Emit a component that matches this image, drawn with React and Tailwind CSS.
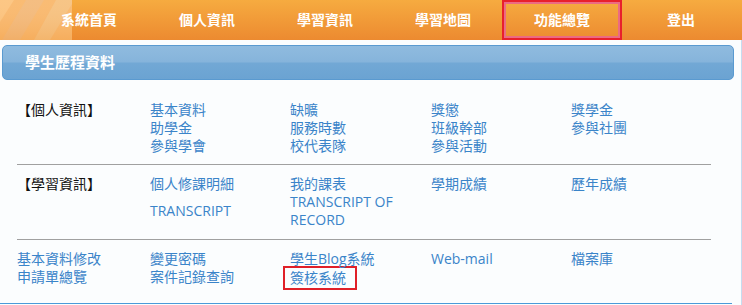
import React from "react";

const cjk = { fontFamily: '"Open Sans", "Noto Sans CJK TC", sans-serif' };

function L({ children }) {
  return <a className="block text-[#3a84c9] leading-[18px] whitespace-nowrap">{children}</a>;
}

const navItems = ["系統首頁", "個人資訊", "學習資訊", "學習地圖", "功能總覽", "登出"];

export default function App() {
  return (
    <div className="w-[742px] h-[305px] overflow-hidden bg-white relative" style={cjk}>
      {/* nav */}
      <div className="relative h-[40px] bg-gradient-to-b from-[#f6ab40] to-[#ec8a30] flex">
        <svg className="absolute left-0 top-0" width="72" height="40" viewBox="0 0 72 40">
          <rect x="0" y="0" width="72" height="40" fill="#f9b668" />
          <polygon points="0,0 14,0 0,22" fill="#fcc27a" />
          <polygon points="26,0 44,0 20,40 2,40" fill="#f3b877" />
          <polygon points="56,0 72,0 72,4 50,40 34,40" fill="#f6c07c" />
          <rect x="0" y="0" width="72" height="40" fill="url(#shade)" />
          <defs>
            <linearGradient id="shade" x1="0" y1="0" x2="0" y2="1">
              <stop offset="0" stopColor="#ffffff" stopOpacity="0.08" />
              <stop offset="1" stopColor="#e88a30" stopOpacity="0.2" />
            </linearGradient>
          </defs>
        </svg>
        <div className="w-[30px] shrink-0" />
        {navItems.map((t) => (
          <div
            key={t}
            className={
              "relative w-[118px] shrink-0 flex items-center justify-center text-white font-bold text-[14px] pb-[2px] " +
              (t === "功能總覽" ? "border-2 border-[#e8202c] shadow-[inset_0_0_0_2px_#ec6a82] w-[120px]" : "")
            }
          >
            {t}
          </div>
        ))}
      </div>

      {/* content */}
      <div className="h-[265px] border-r border-[#c6dcf0] bg-[#fbfdfe] pt-[5px]">
        <div className="ml-[2px] w-[732px] h-[35px] rounded-[5px] border border-[#5a9ad0] bg-[linear-gradient(to_bottom,#8fbbdf_0%,#86b4db_48%,#72a8d5_52%,#6ba3d2_100%)] flex items-center pl-[22px]">
          <span className="text-white font-bold text-[15px] pb-[1px]">學生歷程資料</span>
        </div>

        <div className="ml-[17px] w-[694px] text-[14px] mt-[21px]">
          {/* row 1 */}
          <div className="grid grid-cols-[133px_140px_141px_140px_140px] pb-[9px] border-b border-[#a0a0a0]">
            <div className="leading-[18px] text-[#111]">【個人資訊】</div>
            <div>
              <L>基本資料</L>
              <L>助學金</L>
              <L>參與學會</L>
            </div>
            <div>
              <L>缺曠</L>
              <L>服務時數</L>
              <L>校代表隊</L>
            </div>
            <div>
              <L>獎懲</L>
              <L>班級幹部</L>
              <L>參與活動</L>
            </div>
            <div>
              <L>獎學金</L>
              <L>參與社團</L>
            </div>
          </div>

          {/* row 2 */}
          <div className="grid grid-cols-[133px_140px_141px_140px_140px] pt-[10px] pb-[10px] border-b border-[#a0a0a0]">
            <div className="leading-[18px] text-[#111]">【學習資訊】</div>
            <L>個人修課明細</L>
            <L>我的課表</L>
            <L>學期成績</L>
            <L>歷年成績</L>
            <div />
            <div className="flex items-center">
              <L>TRANSCRIPT</L>
            </div>
            <div>
              <L>TRANSCRIPT OF</L>
              <L>RECORD</L>
            </div>
          </div>

          {/* row 3 */}
          <div className="grid grid-cols-[133px_140px_141px_140px_140px] pt-[10px]">
            <div>
              <L>基本資料修改</L>
              <L>申請單總覽</L>
            </div>
            <div>
              <L>變更密碼</L>
              <L>案件記錄查詢</L>
            </div>
            <div>
              <L>學生Blog系統</L>
              <div className="-ml-[7px] mt-[-2px] w-[74px] h-[24px] border-2 border-[#e02028] flex items-center pl-[5px]">
                <span className="text-[#3a84c9] leading-[18px] whitespace-nowrap">簽核系統</span>
              </div>
            </div>
            <div>
              <L>Web-mail</L>
            </div>
            <div>
              <L>檔案庫</L>
            </div>
          </div>
        </div>
      </div>
      <div className="absolute left-0 top-[303px] w-[732px] h-[1px] bg-[#4a9ad8]" />
    </div>
  );
}
